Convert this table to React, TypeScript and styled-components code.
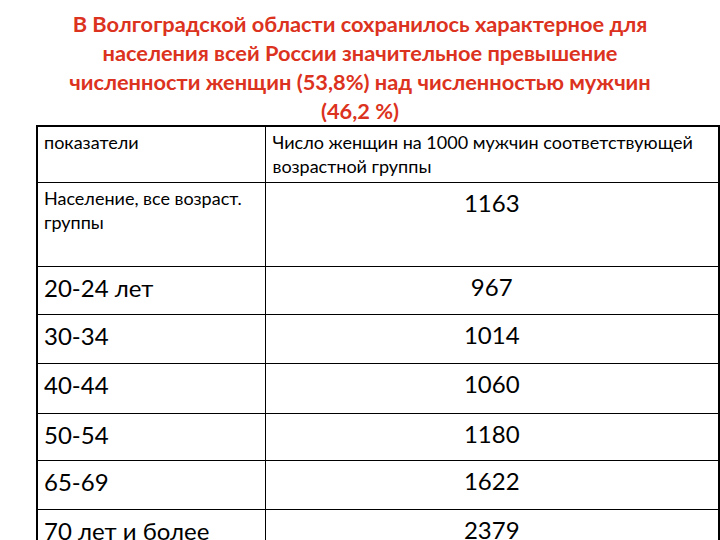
import React from 'react';
import styled, {createGlobalStyle} from 'styled-components';

const GlobalStyle = createGlobalStyle`
  html, body {
    margin: 0;
    padding: 0;
    background: #ffffff;
  }
  body {
    font-family: Lato, "Open Sans", sans-serif;
    color: #000000;
  }
`;

const Slide = styled.div`
  width: 720px;
  height: 540px;
  overflow: hidden;
  display: flex;
  flex-direction: column;
`;

const Title = styled.h1`
  margin: 0;
  padding: 9px 0 0;
  font-size: 21.8px;
  line-height: 29px;
  font-weight: 700;
  text-align: center;
  color: #dc3220;
  white-space: nowrap;
`;

const Table = styled.table`
  margin-left: 36px;
  width: 684px;
  border-collapse: collapse;
  border: 2px solid #000000;
  table-layout: fixed;
`;

const Row = styled.tr<{$h: number}>`
  height: ${p => p.$h}px;
`;

const LabelCell = styled.td<{$big?: boolean}>`
  box-sizing: border-box;
  width: 228px;
  border: 1px solid #000000;
  vertical-align: top;
  padding: ${p => (p.$big ? '6px 6px 0' : '3px 6px 0')};
  font-size: ${p => (p.$big ? '24px' : '18px')};
  line-height: ${p => (p.$big ? '30px' : '24px')};
`;

const ValueCell = styled.td<{$center?: boolean}>`
  box-sizing: border-box;
  border: 1px solid #000000;
  vertical-align: top;
  padding: ${p => (p.$center ? '5px 6px 0' : '3px 7px 0')};
  text-align: ${p => (p.$center ? 'center' : 'left')};
  font-size: ${p => (p.$center ? '24px' : '18px')};
  line-height: ${p => (p.$center ? '30px' : '24px')};
`;

const rows: {label: string; value: string; h: number; small?: boolean}[] = [
  {label: 'Население, все возраст. группы', value: '1163', h: 84, small: true},
  {label: '20-24 лет', value: '967', h: 48},
  {label: '30-34', value: '1014', h: 49},
  {label: '40-44', value: '1060', h: 50},
  {label: '50-54', value: '1180', h: 47},
  {label: '65-69', value: '1622', h: 49},
  {label: '70 лет и более', value: '2379', h: 50},
];

export default function App() {
  return (
    <Slide>
      <GlobalStyle />
      <Title>
        В Волгоградской области сохранилось характерное для
        <br />
        населения всей России значительное превышение
        <br />
        численности женщин (53,8%) над численностью мужчин
        <br />
        (46,2 %)
      </Title>
      <Table>
        <tbody>
          <Row $h={56}>
            <LabelCell>показатели</LabelCell>
            <ValueCell>Число женщин на 1000 мужчин соответствующей возрастной группы</ValueCell>
          </Row>
          {rows.map(r => (
            <Row key={r.label} $h={r.h}>
              <LabelCell $big={!r.small}>{r.label}</LabelCell>
              <ValueCell $center>{r.value}</ValueCell>
            </Row>
          ))}
        </tbody>
      </Table>
    </Slide>
  );
}
